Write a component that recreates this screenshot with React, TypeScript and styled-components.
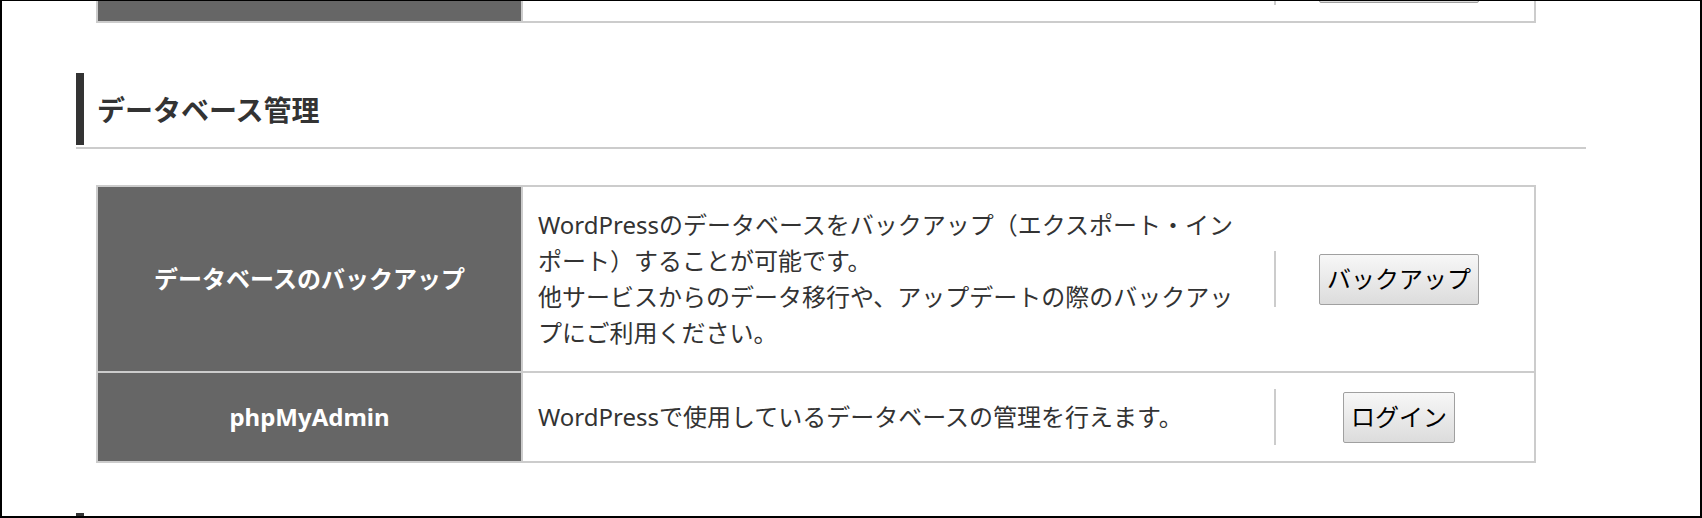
import React from 'react'
import styled, { createGlobalStyle } from 'styled-components'

const GlobalStyle = createGlobalStyle`
    html, body {
        margin: 0;
        padding: 0;
        background: #fff;
    }
    body {
        font-family: 'Noto Sans', 'Noto Sans CJK JP', sans-serif;
        color: #333;
    }
`

type Item = {
    label: string
    description: React.ReactNode
    action: string
}

const previousItems: Item[] = [
    { label: '', description: '', action: 'ダウンロード' },
]

const databaseItems: Item[] = [
    {
        label: 'データベースのバックアップ',
        description: (
            <>
                WordPressのデータベースをバックアップ（エクスポート・インポート）することが可能です。
                <br />
                他サービスからのデータ移行や、アップデートの際のバックアップにご利用ください。
            </>
        ),
        action: 'バックアップ',
    },
    {
        label: 'phpMyAdmin',
        description: 'WordPressで使用しているデータベースの管理を行えます。',
        action: 'ログイン',
    },
]

const SettingsTable = ({ items }: { items: Item[] }) => (
    <Table>
        {items.map((item, i) => (
            <Row key={i}>
                <Label>{item.label}</Label>
                <Description>{item.description}</Description>
                <Action>
                    <Divider>
                        <Button type="button">{item.action}</Button>
                    </Divider>
                </Action>
            </Row>
        ))}
    </Table>
)

const App = () => {
    return (
        <>
            <GlobalStyle />
            <Frame>
                <Page>
                    <Section>
                        <SettingsTable items={previousItems} />
                    </Section>
                    <Section>
                        <Heading>
                            <HeadingText>データベース管理</HeadingText>
                        </Heading>
                        <SettingsTable items={databaseItems} />
                    </Section>
                    <Section>
                        <Heading>
                            <HeadingText>その他の設定</HeadingText>
                        </Heading>
                    </Section>
                </Page>
            </Frame>
        </>
    )
}

export default App

const Frame = styled.div`
    width: 1702px;
    height: 518px;
    box-sizing: border-box;
    border: 2px solid #000;
    border-top-width: 1px;
    overflow: hidden;
    background: #fff;
`

const Page = styled.div`
    margin-top: -70px;
    padding-left: 74px;
`

const Section = styled.section`
    width: 1510px;
    margin-bottom: 50px;
`

const Heading = styled.h2`
    margin: 0 0 36px;
    padding-bottom: 2px;
    border-bottom: 2px solid #ccc;
`

const HeadingText = styled.div`
    display: flex;
    align-items: center;
    height: 72px;
    padding-left: 13px;
    border-left: 8px solid #333;
    font-size: 28px;
    font-weight: 700;
    color: #333;
`

const Table = styled.div`
    width: 1440px;
    margin-left: 20px;
    box-sizing: border-box;
    border: 2px solid #ccc;
`

const Row = styled.div`
    display: flex;
    align-items: stretch;
    & + & {
        border-top: 2px solid #ccc;
    }
`

const Label = styled.div`
    flex: 0 0 425px;
    box-sizing: border-box;
    display: flex;
    align-items: center;
    justify-content: center;
    background: #666;
    border-right: 2px solid #ccc;
    color: #fff;
    font-size: 24px;
    font-weight: 700;
    line-height: 36px;
    text-align: center;
`

const Description = styled.div`
    flex: 1;
    display: flex;
    align-items: center;
    padding: 20px 30px 20px 15px;
    font-size: 24px;
    line-height: 36px;
    color: #333;
`

const Action = styled.div`
    flex: 0 0 260px;
    box-sizing: border-box;
    display: flex;
    align-items: center;
    padding: 16px 12px 16px 0;
`

const Divider = styled.div`
    flex: 1;
    height: 56px;
    display: flex;
    align-items: center;
    justify-content: center;
    border-left: 2px solid #ccc;
`

const Button = styled.button`
    margin: 0;
    padding: 6px 7px 7px;
    border: 1px solid #a0a0a0;
    border-radius: 2px;
    background: linear-gradient(#f7f7f7, #dcdcdc);
    color: #000;
    font-family: 'Noto Sans', 'Noto Sans CJK JP', sans-serif;
    font-size: 24px;
    line-height: 36px;
    cursor: pointer;
`
